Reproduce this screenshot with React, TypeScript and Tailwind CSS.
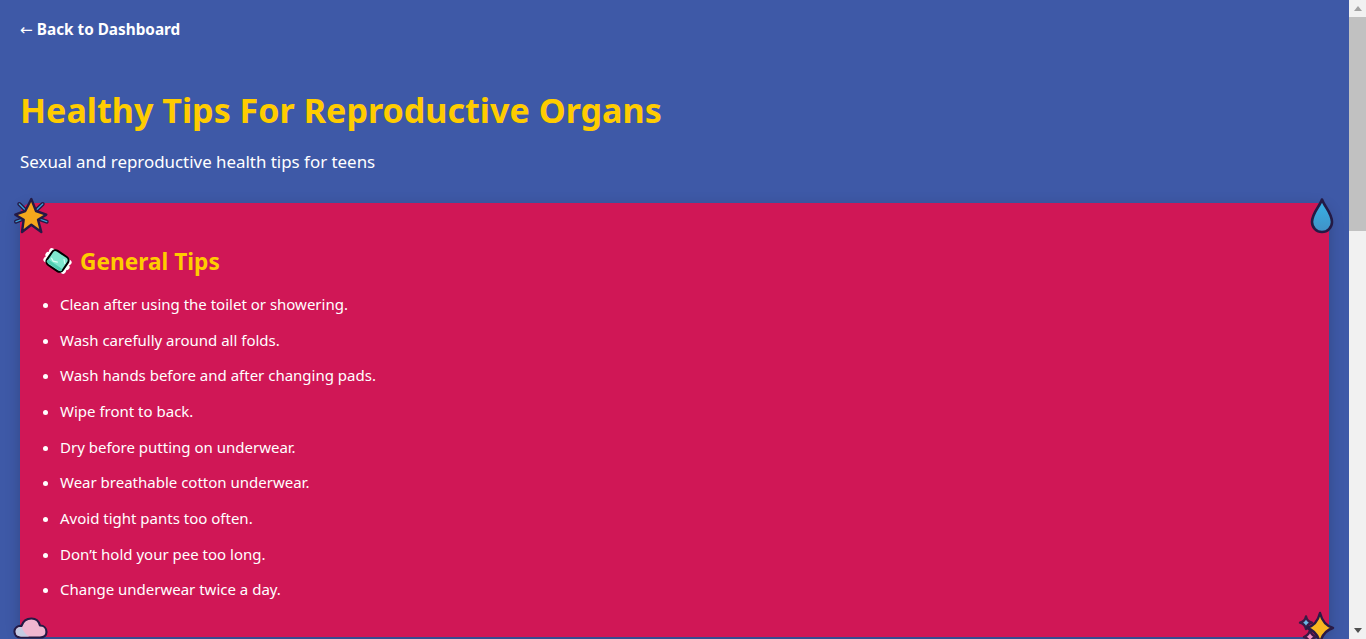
import React from 'react';

const tips = [
  'Clean after using the toilet or showering.',
  'Wash carefully around all folds.',
  'Wash hands before and after changing pads.',
  'Wipe front to back.',
  'Dry before putting on underwear.',
  'Wear breathable cotton underwear.',
  'Avoid tight pants too often.',
  'Don’t hold your pee too long.',
  'Change underwear twice a day.',
];

const rays = 'M6.3 8l5.700 5.700M29.700 8l-6 5.700M3 25.700l7-2.700M33.700 25.700l-7.400-2.700';

const StarIcon = () => (
  <svg className="absolute left-[-7px] top-[-7px] w-[38px] h-[38px]" viewBox="0 0 38 38">
    <path d={rays} stroke="#241a45" strokeWidth="4" strokeLinecap="round" />
    <path d={rays} stroke="#3aa0d8" strokeWidth="1.300" strokeLinecap="round" />
    <path
      d="M18.300 3L23 15l10.300 3.700L25 23.700 28.300 36l-10-7.300L9 36l1.700-12.300-8.400-5L12.300 15z"
      fill="#f5a81c"
      stroke="#241a45"
      strokeWidth="2.400"
      strokeLinejoin="round"
    />
  </svg>
);

const DropIcon = () => (
  <svg className="absolute right-[-5px] top-[-6px] w-[24px] h-[38px]" viewBox="0 0 24 38">
    <defs>
      <linearGradient id="drop" x1="0" y1="0" x2="0" y2="1">
        <stop offset="0" stopColor="#36b4e8" />
        <stop offset="1" stopColor="#4190c6" />
      </linearGradient>
    </defs>
    <path
      d="M12 2.500C10 9 2 16 2 25a10 10 0 0 0 20 0C22 16 14 9 12 2.500z"
      fill="url(#drop)"
      stroke="#241a45"
      strokeWidth="2.600"
      strokeLinejoin="round"
    />
  </svg>
);

const CloudIcon = () => (
  <svg className="absolute left-[-7px] bottom-[-2px] w-[35px] h-[22px]" viewBox="0 0 35 22">
    <path
      d="M8 20.500C3.500 20.500 1.500 17.500 1.500 14.500 1.500 11 4.500 8.500 8.500 9 10 4 14 1.500 18.500 1.500 23 1.500 26 4.500 27 8.500 31 8.500 33.500 11.500 33.500 15 33.500 18 31 20.500 27 20.500z"
      fill="#f0b6d0"
      stroke="#241a45"
      strokeWidth="2.200"
      strokeLinejoin="round"
    />
    <path d="M8 19.400C4.500 19.400 2.700 17 2.700 14.500 2.700 11.500 5 10 8.500 10 10 14 12 17 16 19.400z" fill="#c4cbe2" />
  </svg>
);

const SparkleIcon = () => (
  <svg className="absolute right-[-8px] bottom-[-2px] w-[40px] h-[29px]" viewBox="0 0 40 29">
    <path d="M9 6.500Q10 11.500 15 12.700 10 14 9 19 8 14 3 12.700 8 11.500 9 6.500z" fill="#6ab7e6" stroke="#3a1a45" strokeWidth="2.400" strokeLinejoin="round" />
    <path d="M13 20Q14 25 19 27 14 28 13 34 12 28 7 27 12 25 13 20z" fill="#ee8fc0" stroke="#3a1a45" strokeWidth="2.400" strokeLinejoin="round" />
    <path d="M23 3Q26 15 36 18 26 21 23 33 20 21 10 18 20 15 23 3z" fill="#f8b81f" stroke="#2a1a45" strokeWidth="2.400" strokeLinejoin="round" />
  </svg>
);

const PadIcon = () => (
  <svg className="ml-[3px] mt-[-2px] w-[30px] h-[30px] shrink-0" viewBox="0 0 30 30">
    <g transform="rotate(34 14.500 15)">
      <g fill="#fff">
        <circle cx="4.500" cy="10" r="3" />
        <circle cx="3.500" cy="15" r="3" />
        <circle cx="4.500" cy="20" r="3" />
        <circle cx="24.500" cy="10" r="3" />
        <circle cx="25.500" cy="15" r="3" />
        <circle cx="24.500" cy="20" r="3" />
      </g>
      <rect x="5" y="6.500" width="19" height="17" rx="4" fill="#7fe8cf" stroke="#000" strokeWidth="2" />
      <path d="M7 20.500h15" stroke="#4fcdb0" strokeWidth="3" strokeLinecap="round" />
      <path d="M8 16l3 1.500 4-1.500M19 10l3 3" stroke="#d8fff5" strokeWidth="1.200" strokeLinecap="round" fill="none" />
    </g>
  </svg>
);

export default function App() {
  return (
    <div
      className="flex h-screen overflow-hidden bg-[#3e59a7] text-white"
      style={{ fontFamily: '"Noto Sans", "Open Sans", sans-serif' }}
    >
      <main className="flex-1 min-w-0 overflow-hidden p-5">
        <a href="#" className="block h-[18px] text-[15.3px] leading-[18px] font-bold">
          <span className="font-['DejaVu_Sans'] font-normal leading-none">←</span> Back to Dashboard
        </a>
        <h1 className="mt-[50px] text-[34.1px] leading-[44px] font-bold text-[#ffcc00]">
          Healthy Tips For Reproductive Organs
        </h1>
        <p className="mt-[17px] text-[16.9px] leading-[26px]">Sexual and reproductive health tips for teens</p>
        <section className="relative mt-[28px] h-[434px] rounded-[12px] bg-[#d01756] px-5 pt-[29px] shadow-[0_4px_15px_rgba(0,0,0,0.2)]">
          <StarIcon />
          <DropIcon />
          <CloudIcon />
          <SparkleIcon />
          <h2 className="flex items-center gap-[7px] text-[22.7px] leading-[60px] h-[60px] font-bold text-[#ffcc00]">
            <PadIcon />
            General Tips
          </h2>
          <ul className="list-disc pl-5 mt-[-5px]">
            {tips.map((tip) => (
              <li key={tip} className="text-[15px] leading-[35.65px]">
                {tip}
              </li>
            ))}
          </ul>
        </section>
      </main>
      <div className="flex w-[17px] shrink-0 flex-col items-center bg-[#f1f1f1]">
        <div className="mt-[6px] h-0 w-0 border-x-[4px] border-b-[5px] border-x-transparent border-b-[#a3a3a3]" />
        <div className="mt-[6px] h-[214px] w-full bg-[#c1c1c1]" />
        <div className="mt-auto mb-[6px] h-0 w-0 border-x-[4px] border-t-[5px] border-x-transparent border-t-[#505050]" />
      </div>
    </div>
  );
}
